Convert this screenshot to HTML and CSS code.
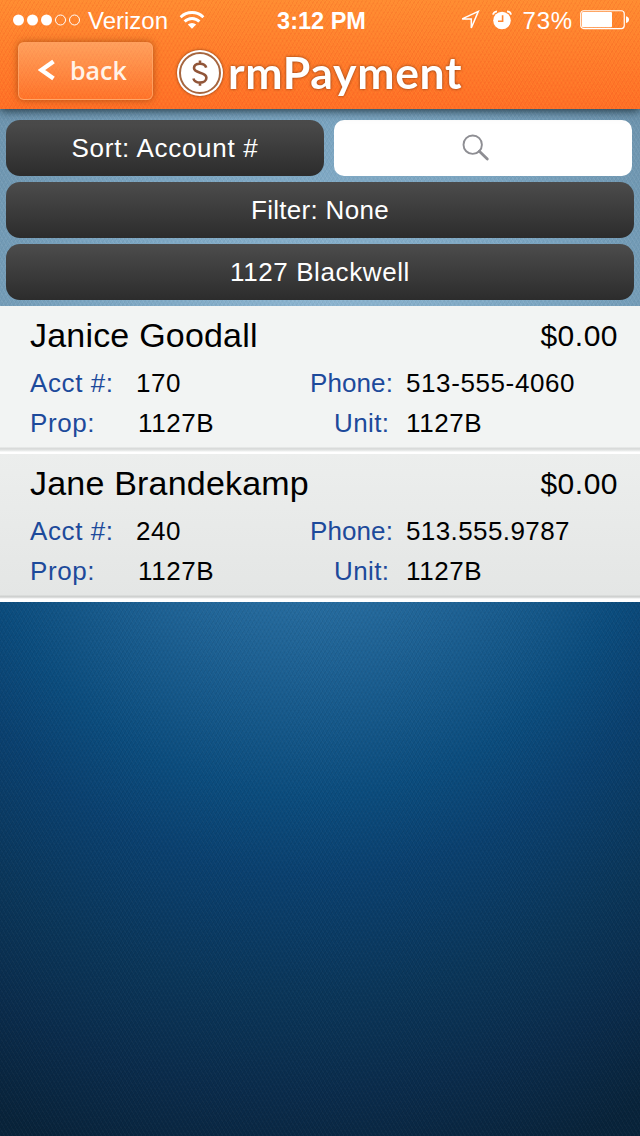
FILE: index.html
```
<!DOCTYPE html>
<html lang="en">
<head>
    <meta charset="UTF-8">
    <meta name="viewport" content="width=device-width, initial-scale=1.0">
    <title>rmPayment</title>
    <link rel="stylesheet" href="styles.css">
</head>
<body>
    <div class="app">
        <header class="header">
            <div class="status-bar">
                <div class="status-left">
                    <svg class="signal" width="68" height="12" viewBox="0 0 68 12">
                        <g fill="#fff">
                            <circle cx="5.5" cy="6" r="5.5"/>
                            <circle cx="19.5" cy="6" r="5.5"/>
                            <circle cx="33.5" cy="6" r="5.5"/>
                        </g>
                        <g fill="none" stroke="#fff">
                            <circle cx="47.5" cy="6" r="5"/>
                            <circle cx="61.5" cy="6" r="5"/>
                        </g>
                    </svg>
                    <span class="carrier">Verizon</span>
                    <svg class="wifi" width="26" height="18" viewBox="0 0 26 18">
                        <g fill="none" stroke="#fff" stroke-width="2.8">
                            <path d="M1.6 6.2a16.2 16.2 0 0 1 22.8 0"/>
                            <path d="M5.6 10.6a10.4 10.4 0 0 1 14.8 0"/>
                        </g>
                        <path d="M13 17.8l-4.2-4.2a6 6 0 0 1 8.4 0z" fill="#fff"/>
                    </svg>
                </div>
                <div class="clock">3:12 PM</div>
                <div class="status-right">
                    <svg class="location" width="20" height="21" viewBox="0 0 20 21">
                        <path d="M18.3 1.4L2.2 8.9h9.1v9.1z" fill="none" stroke="#fff" stroke-width="1.5"/>
                    </svg>
                    <svg class="alarm" width="20" height="20" viewBox="0 0 20 20">
                        <circle cx="10" cy="10.5" r="8.8" fill="#fff"/>
                        <path d="M1 4.6Q1.6 1.6 5 1.3M19 4.6Q18.4 1.6 15 1.3" fill="none" stroke="#fff" stroke-width="1.8"/>
                        <path d="M10.6 5.2v6.1H6" fill="none" stroke="#ff8630" stroke-width="1.6"/>
                    </svg>
                    <span class="percent">73%</span>
                    <svg class="battery" width="50" height="20" viewBox="0 0 50 20">
                        <rect x=".75" y=".75" width="43.5" height="17.8" rx="3" fill="none" stroke="#fff" stroke-width="1.2"/>
                        <rect x="2" y="2" width="30" height="15.2" rx="1" fill="#fff"/>
                        <path d="M46 6.2q3 .8 3 3.4t-3 3.4z" fill="#fff"/>
                    </svg>
                </div>
            </div>
            <div class="nav-bar">
                <button class="back-button">
                    <svg width="17" height="22" viewBox="0 0 17 22">
                        <path d="M15.5 2.5L3.5 11l12 8.5" fill="none" stroke="#fff" stroke-width="4.4"/>
                    </svg>
                    back
                </button>
                <div class="logo">
                    <svg class="coin" width="48" height="48" viewBox="0 0 48 48">
                        <circle cx="24" cy="24" r="23" fill="#fff"/>
                        <circle cx="24" cy="24" r="20" fill="none" stroke="#a6663f" stroke-width="2"/>
                        <path d="M30.2 18.6q-1-3.9-6.2-3.9c-3.8 0-6 1.7-6 4.4 0 5.9 12.4 3.3 12.4 9.6 0 3-2.6 4.9-6.4 4.9q-5.4 0-6.6-4.1M24 11.5v3.2M24 33.6v3.2" fill="none" stroke="#915538" stroke-width="2.6"/>
                    </svg>
                    <span class="logo-text">rmPayment</span>
                </div>
            </div>
        </header>

        <div class="controls">
            <div class="control-row">
                <button class="dark-button sort">Sort: Account #</button>
                <div class="search">
                    <svg width="28" height="28" viewBox="0 0 28 28">
                        <circle cx="10.7" cy="10.7" r="9.2" fill="none" stroke="#8e8e93" stroke-width="1.9"/>
                        <path d="M17.3 17.3l8 7.8" stroke="#8e8e93" stroke-width="2.8" stroke-linecap="round"/>
                    </svg>
                </div>
            </div>
            <button class="dark-button filter">Filter: None</button>
            <button class="dark-button">1127 Blackwell</button>
        </div>

        <div class="tenants">
            <div class="tenant">
                <div class="tenant-top">
                    <span class="name">Janice Goodall</span>
                    <span class="balance">$0.00</span>
                </div>
                <div class="details">
                    <span class="label">Acct #:</span>
                    <span class="value">170</span>
                    <span class="label phone">Phone:</span>
                    <span class="value">513-555-4060</span>
                    <span class="label">Prop:</span>
                    <span class="value prop">1127B</span>
                    <span class="label unit">Unit:</span>
                    <span class="value">1127B</span>
                </div>
            </div>
            <div class="tenant alt">
                <div class="tenant-top">
                    <span class="name">Jane Brandekamp</span>
                    <span class="balance">$0.00</span>
                </div>
                <div class="details">
                    <span class="label">Acct #:</span>
                    <span class="value">240</span>
                    <span class="label phone">Phone:</span>
                    <span class="value dotted">513.555.9787</span>
                    <span class="label">Prop:</span>
                    <span class="value prop">1127B</span>
                    <span class="label unit">Unit:</span>
                    <span class="value">1127B</span>
                </div>
            </div>
        </div>
    </div>
</body>
</html>
```
FILE: styles.css
```
* {
    margin: 0;
    padding: 0;
    box-sizing: border-box;
}

body {
    font-family: "Liberation Sans", Arial, sans-serif;
    color: #000;
    background: #08233a;
}

button {
    border: 0;
    font-family: inherit;
}

svg {
    display: block;
    flex: none;
}

.app {
    width: 640px;
    height: 1136px;
    overflow: hidden;
    background:
        repeating-linear-gradient(60deg, rgba(255,255,255,0.025) 0 1px, transparent 1px 3.5px),
        repeating-linear-gradient(-60deg, rgba(0,0,0,0.05) 0 1px, transparent 1px 3.5px),
        radial-gradient(ellipse 800px 880px at 310px 400px, #3a80b0 0%, #266b9e 23%, #0b4c7d 45%, #0a406f 54%, #0a3558 68%, #0a2b4b 79%, #08233a 90%);
}

/* Header */
.header {
    position: relative;
    height: 109px;
    background:
        repeating-linear-gradient(60deg, rgba(255,170,60,0.12) 0 1px, transparent 1px 3.5px),
        repeating-linear-gradient(-60deg, rgba(225,60,20,0.12) 0 1px, transparent 1px 3.5px),
        linear-gradient(#ff8c32, #ff6f26);
    box-shadow: 0 2px 9px rgba(20,40,50,0.85);
}

.status-bar {
    display: grid;
    grid-template-columns: 1fr auto 1fr;
    height: 40px;
    padding: 0 10px 0 13px;
    align-items: center;
    color: #fff;
    font-size: 24px;
}

.status-left,
.status-right {
    display: flex;
    align-items: center;
}

.status-right {
    justify-content: flex-end;
}

.carrier {
    margin: 2px 11px 0 7px;
}

.clock {
    font-weight: bold;
    font-size: 23.5px;
    padding-top: 2px;
}

.alarm {
    margin-left: 12px;
}

.percent {
    margin: 2px 7px 0 11px;
    letter-spacing: 0.8px;
}

.nav-bar {
    display: flex;
    align-items: flex-start;
    padding: 2px 0 0 18px;
}

.back-button {
    display: flex;
    align-items: center;
    width: 135px;
    height: 58px;
    padding: 0 0 2px 19px;
    gap: 15px;
    border: 1px solid rgba(255,170,110,0.75);
    border-radius: 6px;
    background: linear-gradient(rgba(255,190,140,0.5), rgba(255,120,50,0.3));
    box-shadow: 0 0 7px rgba(130,60,10,0.65);
    color: #fff3e8;
    font: 600 25px "Open Sans", sans-serif;
}

.logo {
    display: flex;
    align-items: center;
    margin-left: 23px;
    height: 62px;
    filter: drop-shadow(0 0 1.5px rgba(120,50,10,0.9));
}

.logo-text {
    margin: -2px 0 0 4px;
    color: #fff;
    font: 700 44.5px/62px Lato, sans-serif;
    letter-spacing: 0.7px;
}

/* Sort, search and filter */
.controls {
    display: flex;
    flex-direction: column;
    gap: 6px;
    height: 197px;
    padding: 11px 6px 6px;
    background:
        repeating-linear-gradient(60deg, rgba(255,255,255,0.06) 0 1px, transparent 1px 3.5px),
        repeating-linear-gradient(-60deg, rgba(0,0,0,0.03) 0 1px, transparent 1px 3.5px),
        radial-gradient(ellipse 400px 340px at 320px 220px, #8db5d0, #7aa4c0 60%, #6d94ae);
}

.control-row {
    display: flex;
    gap: 10px;
    padding-right: 2px;
}

.dark-button {
    height: 56px;
    border-radius: 14px;
    background: linear-gradient(#4c4c4c, #2c2c2c);
    color: #fff;
    font-size: 26px;
    letter-spacing: 0.6px;
}

.sort {
    width: 318px;
    letter-spacing: 0.7px;
}

.filter {
    letter-spacing: 0.3px;
}

.search {
    flex: 1;
    display: flex;
    align-items: center;
    justify-content: center;
    padding-right: 14px;
    border-radius: 10px;
    background: #fff;
}

/* Tenant list */
.tenant {
    height: 148px;
    padding: 9px 22px 0 30px;
    background: linear-gradient(#f2f4f3 0 141px, #d9dbda 142px 143px, #eceeed 145px, #fff 146px);
}

.tenant.alt {
    background: linear-gradient(#eceeed, #e4e6e5 141px, #cfd1d0 142px 143px, #fff 145px);
}

.tenant-top {
    display: flex;
    justify-content: space-between;
    height: 42px;
    line-height: 42px;
}

.name {
    font-size: 34px;
    line-height: 40px;
    letter-spacing: 0.2px;
}

.balance {
    font-size: 30px;
    letter-spacing: 0.5px;
}

.details {
    display: grid;
    grid-template-columns: 106px 174px 96px 1fr;
    padding-top: 6px;
    font-size: 26px;
    line-height: 40px;
    letter-spacing: 0.6px;
}

.label {
    color: #1d4a9b;
}

.phone {
    letter-spacing: 0.1px;
}

.dotted {
    letter-spacing: 0.4px;
}

.prop {
    padding-left: 2px;
}

.unit {
    padding-left: 24px;
    letter-spacing: 0.4px;
}
```
